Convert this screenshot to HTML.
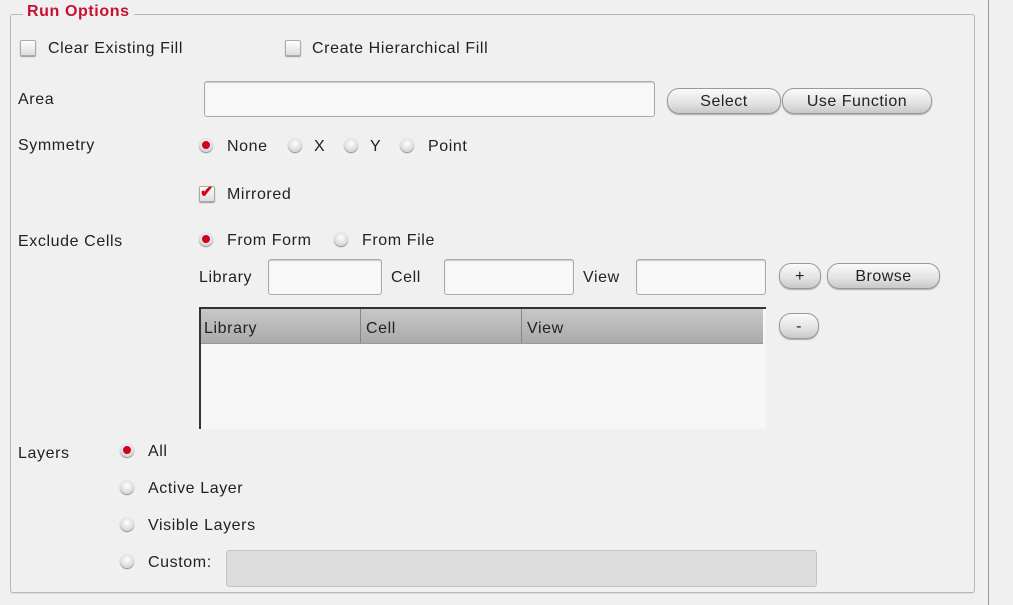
<!DOCTYPE html>
<html><head><style>
body{margin:0;width:1013px;height:605px;background:#f0f0f0;font-family:"Liberation Sans",sans-serif;font-size:16px;color:#222;position:relative;overflow:hidden}
.a{position:absolute;white-space:nowrap;letter-spacing:0.6px;margin-top:2px}
.fr{position:absolute;left:10px;top:14px;width:963px;height:577px;border:1px solid #b8b8b8;border-radius:3px;box-shadow:0 1px 0 #ddd}
.lg{position:absolute;left:23px;top:1px;background:#f0f0f0;padding:0 4px;color:#c8102e;font-weight:bold;font-size:16px}
.cb{position:absolute;width:14px;height:14px;border:1px solid #aaa;border-radius:2px;background:linear-gradient(#fff,#ddd);box-shadow:0 1px 1px #999}
.rb{position:absolute;width:14px;height:14px;border-radius:50%;background:radial-gradient(circle at 50% 40%,#fff,#ddd 60%,#bbb);box-shadow:0 1px 1px #888}
.rb.on::after{content:"";position:absolute;left:3px;top:3px;width:8px;height:8px;border-radius:50%;background:#d0021b}
.in{position:absolute;background:#f8f8f8;border:1px solid #aaa;border-radius:3px;box-shadow:inset 0 1px 1px #ccc}
.bt{position:absolute;height:24px;border:1px solid #999;border-radius:12px;background:linear-gradient(#fafafa,#e2e2e2 60%,#c8c8c8);text-align:center;line-height:26px;font-size:16px;letter-spacing:0.5px;box-shadow:0 1px 1px #aaa}
</style></head><body>
<div class="fr"></div>
<div class="lg a">Run Options</div>
<div style="position:absolute;left:988px;top:0;width:1px;height:605px;background:#999"></div>

<div class="cb" style="left:20px;top:40px"></div><div class="a" style="left:48px;top:38px">Clear Existing Fill</div>
<div class="cb" style="left:285px;top:40px"></div><div class="a" style="left:312px;top:38px">Create Hierarchical Fill</div>

<div class="a" style="left:18px;top:89px">Area</div>
<div class="in" style="left:204px;top:81px;width:449px;height:34px"></div>
<div class="bt" style="left:667px;top:88px;width:112px">Select</div>
<div class="bt" style="left:782px;top:88px;width:148px">Use Function</div>

<div class="a" style="left:18px;top:135px">Symmetry</div>
<div class="rb on" style="left:199px;top:138px"></div><div class="a" style="left:227px;top:136px">None</div>
<div class="rb" style="left:288px;top:138px"></div><div class="a" style="left:314px;top:136px">X</div>
<div class="rb" style="left:344px;top:138px"></div><div class="a" style="left:370px;top:136px">Y</div>
<div class="rb" style="left:400px;top:138px"></div><div class="a" style="left:428px;top:136px">Point</div>

<div class="cb" style="left:199px;top:186px"></div><div class="a" style="left:200px;top:180px;color:#d0021b;font-weight:bold;font-size:16px">✔</div>
<div class="a" style="left:227px;top:184px">Mirrored</div>

<div class="a" style="left:18px;top:231px">Exclude Cells</div>
<div class="rb on" style="left:199px;top:232px"></div><div class="a" style="left:227px;top:230px">From Form</div>
<div class="rb" style="left:334px;top:232px"></div><div class="a" style="left:362px;top:230px">From File</div>

<div class="a" style="left:199px;top:267px">Library</div>
<div class="in" style="left:268px;top:259px;width:112px;height:34px"></div>
<div class="a" style="left:391px;top:267px">Cell</div>
<div class="in" style="left:444px;top:259px;width:128px;height:34px"></div>
<div class="a" style="left:583px;top:267px">View</div>
<div class="in" style="left:636px;top:259px;width:128px;height:34px"></div>
<div class="bt" style="left:779px;top:263px;width:40px">+</div>
<div class="bt" style="left:827px;top:263px;width:111px">Browse</div>

<div style="position:absolute;left:199px;top:307px;width:565px;height:120px;background:#f6f6f6;border-left:2px solid #333;border-top:2px solid #333"></div>
<div style="position:absolute;left:201px;top:309px;width:562px;height:34px;background:linear-gradient(#c8c8c8,#aaa);border-bottom:1px solid #999"></div>
<div style="position:absolute;left:360px;top:309px;width:1px;height:34px;background:#888"></div>
<div style="position:absolute;left:521px;top:309px;width:1px;height:34px;background:#888"></div>
<div class="a" style="left:204px;top:318px">Library</div>
<div class="a" style="left:366px;top:318px">Cell</div>
<div class="a" style="left:527px;top:318px">View</div>
<div class="bt" style="left:779px;top:313px;width:38px">-</div>

<div class="a" style="left:18px;top:443px">Layers</div>
<div class="rb on" style="left:120px;top:443px"></div><div class="a" style="left:148px;top:441px">All</div>
<div class="rb" style="left:120px;top:480px"></div><div class="a" style="left:148px;top:478px">Active Layer</div>
<div class="rb" style="left:120px;top:517px"></div><div class="a" style="left:148px;top:515px">Visible Layers</div>
<div class="rb" style="left:120px;top:554px"></div><div class="a" style="left:148px;top:552px">Custom:</div>
<div style="position:absolute;left:226px;top:550px;width:589px;height:35px;background:#dcdcdc;border:1px solid #c4c4c4;border-radius:3px"></div>
</body></html>
